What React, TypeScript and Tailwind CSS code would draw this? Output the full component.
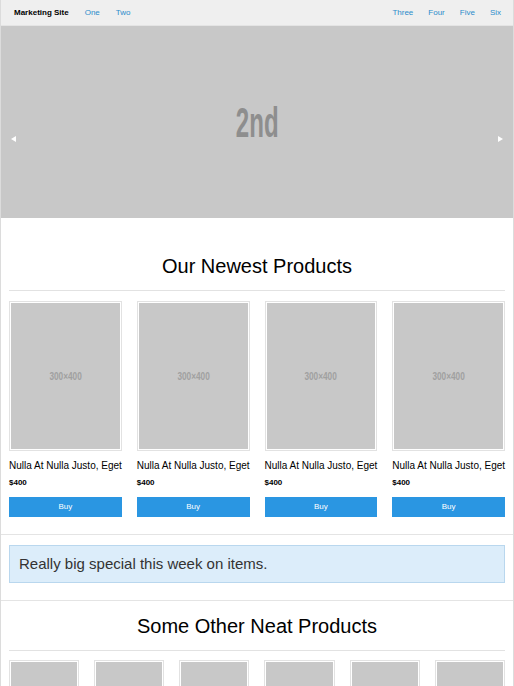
import React from "react";

const leftLinks = ["One", "Two"];
const rightLinks = ["Three", "Four", "Five", "Six"];
const newest = [1, 2, 3, 4];
const others = [1, 2, 3, 4, 5, 6];

const sans = { fontFamily: "'Liberation Sans', Arial, sans-serif" };

function Placeholder({ label, className }: { label?: string; className?: string }) {
  return (
    <div className={"border border-[#e2e2e2] bg-white p-[1px] " + (className ?? "")}>
      <div className="flex h-full w-full items-center justify-center bg-[#c8c8c8]">
        {label && (
          <span className="inline-block scale-x-[0.75] text-[11px] font-bold text-[#a0a0a0]">{label}</span>
        )}
      </div>
    </div>
  );
}

export default function App() {
  return (
    <div className="min-h-[686px] border-x border-[#dcdcdc] bg-white text-[#222]" style={sans}>
      {/* Top bar */}
      <nav className="flex h-[26px] items-center justify-between border-b border-[#e4e4e4] bg-[#efefef] pl-[13px] pr-[12px] text-[8px]">
        <div className="flex items-center gap-[16px]">
          <span className="font-bold text-black">Marketing Site</span>
          {leftLinks.map((l) => (
            <a key={l} className="text-[#2b8ccb]">
              {l}
            </a>
          ))}
        </div>
        <div className="flex items-center gap-[15px]">
          {rightLinks.map((l) => (
            <a key={l} className="text-[#2b8ccb]">
              {l}
            </a>
          ))}
        </div>
      </nav>

      {/* Slider */}
      <div className="relative flex h-[192px] items-start justify-center bg-[#c8c8c8]">
        <span className="mt-[75px] inline-block scale-x-[0.56] text-[43px] leading-none font-bold text-[#8e8e8e]">
          2nd
        </span>
        <span className="absolute top-[110px] left-[10px] h-0 w-0 border-y-[3px] border-r-[5px] border-y-transparent border-r-white" />
        <span className="absolute top-[110px] right-[10px] h-0 w-0 border-y-[3px] border-l-[5px] border-y-transparent border-l-white" />
      </div>

      {/* Newest products */}
      <section className="px-[8px] pt-[36px] pb-[17px]">
        <h2 className="border-b border-[#e2e2e2] pb-[12px] text-center text-[20px] leading-[24px] text-black">
          Our Newest Products
        </h2>
        <div className="mt-[10px] grid grid-cols-4 gap-[15px]">
          {newest.map((n) => (
            <div key={n}>
              <Placeholder label="300×400" className="h-[150px]" />
              <p className="mt-[9px] text-[10px] leading-[12px] whitespace-nowrap text-black">
                Nulla At Nulla Justo, Eget
              </p>
              <p className="mt-[6px] text-[8px] leading-[10px] font-bold text-black">$400</p>
              <button className="mt-[9px] h-[20px] w-full bg-[#2a96e2] text-[8px] text-white">
                Buy
              </button>
            </div>
          ))}
        </div>
      </section>

      {/* Special */}
      <section className="border-y border-[#e4e4e4] px-[8px] pt-[10px] pb-[17px]">
        <div className="flex h-[38px] items-center border border-[#b9d7ee] bg-[#dcedfa] pl-[9px] text-[15px] text-[#333]">
          Really big special this week on items.
        </div>
      </section>

      {/* Other products */}
      <section className="px-[8px] pt-[13px]">
        <h2 className="border-b border-[#e2e2e2] pb-[12px] text-center text-[20px] leading-[24px] text-black">
          Some Other Neat Products
        </h2>
        <div className="mt-[9px] grid grid-cols-6 gap-[15px]">
          {others.map((n) => (
            <Placeholder key={n} className="h-[90px]" />
          ))}
        </div>
      </section>
    </div>
  );
}
